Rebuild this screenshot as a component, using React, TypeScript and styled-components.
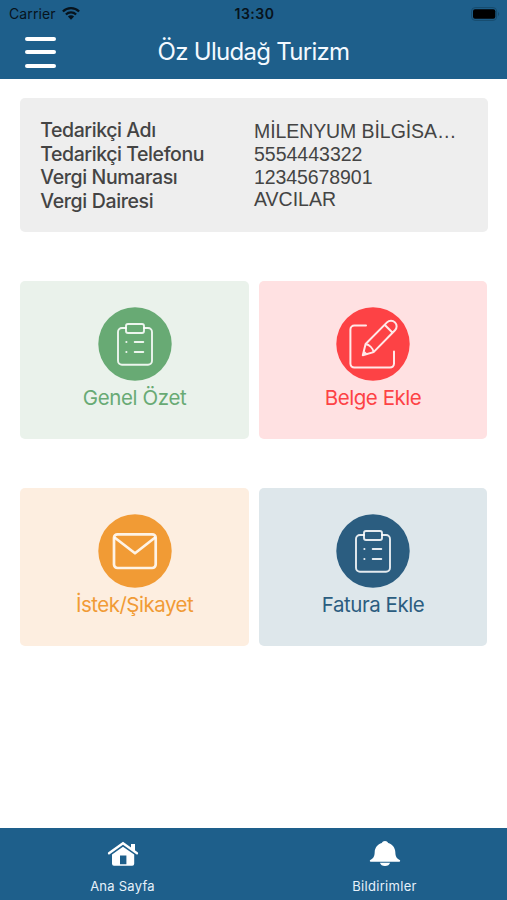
import React from "react";
import styled, { createGlobalStyle } from "styled-components";

const GlobalStyle = createGlobalStyle`
  * { box-sizing: border-box; }
  body { margin: 0; background: #fff; font-family: Inter, "Liberation Sans", sans-serif; }
`;

const Screen = styled.div`
  width: 507px;
  height: 900px;
  display: flex;
  flex-direction: column;
  background: #fff;
  overflow: hidden;
`;

const Header = styled.header`
  height: 79px;
  flex: none;
  background: #1e5f8b;
`;

const StatusBar = styled.div`
  height: 27px;
  padding: 0 7px 0 9px;
  display: grid;
  grid-template-columns: 1fr auto 1fr;
  align-items: center;
  color: #07131c;
`;

const Carrier = styled.div`
  display: flex;
  align-items: center;
  gap: 6px;
  font-size: 14px;
  letter-spacing: 0.1px;
`;

const Clock = styled.div`
  font-size: 14px;
  font-weight: 600;
  letter-spacing: 0.5px;
`;

const BatteryIcon = styled.svg`
  justify-self: end;
`;

const NavBar = styled.div`
  height: 50px;
  padding: 0 25px;
  display: grid;
  grid-template-columns: 32px 1fr 32px;
  align-items: center;
`;

const MenuButton = styled.button`
  width: 31px;
  height: 31px;
  padding: 0;
  border: 0;
  background: none;
  display: flex;
  flex-direction: column;
  justify-content: space-between;
`;

const MenuLine = styled.span`
  width: 31px;
  height: 4px;
  border-radius: 2px;
  background: #fff;
`;

const Title = styled.h1`
  margin: 0;
  text-align: center;
  font-size: 24px;
  line-height: 30px;
  font-weight: 400;
  letter-spacing: -0.72px;
  color: #f3f9ff;
`;

const Content = styled.main`
  flex: 1;
  padding: 19px 19px 0 20.3px;
`;

const InfoPanel = styled.section`
  height: 134px;
  padding: 21px 20px 0 20px;
  border-radius: 5px;
  background: #eee;
  display: grid;
  grid-template-columns: 213.7px 205px;
  color: #444;
`;

const LabelColumn = styled.div`
  font-size: 19.5px;
  line-height: 23.6px;
  font-weight: 450;
  white-space: nowrap;
`;

const ValueColumn = styled.div`
  padding-top: 1px;
  font-family: "Liberation Sans", sans-serif;
  font-size: 19.5px;
  line-height: 22.8px;
  white-space: nowrap;
`;

const InfoText = styled.div<{ $spacing?: number }>`
  letter-spacing: ${(p) => p.$spacing ?? 0}px;
`;

const CardGrid = styled.section`
  margin-top: 49px;
  display: grid;
  grid-template-columns: 228.5px 228.5px;
  grid-auto-rows: 158px;
  column-gap: 10px;
  row-gap: 49px;
`;

const Card = styled.button<{ $bg: string; $fg: string }>`
  padding: 26px 0 0;
  border: 0;
  border-radius: 5px;
  background: ${(p) => p.$bg};
  color: ${(p) => p.$fg};
  display: flex;
  flex-direction: column;
  align-items: center;
  font-family: inherit;
`;

const CardLabel = styled.span<{ $spacing: number }>`
  margin-top: 3px;
  font-size: 20.5px;
  line-height: 27px;
  letter-spacing: ${(p) => p.$spacing}px;
  white-space: nowrap;
`;

const TabBar = styled.nav`
  height: 72px;
  flex: none;
  padding: 12px 72px 0;
  background: #1e5f8b;
  display: flex;
  justify-content: space-between;
`;

const Tab = styled.a`
  width: 101px;
  display: flex;
  flex-direction: column;
  align-items: center;
  color: #fff;
`;

const TabLabel = styled.span<{ $spacing: number }>`
  margin-top: 9px;
  font-size: 13px;
  line-height: 18px;
  letter-spacing: ${(p) => p.$spacing}px;
  color: #e6f1fa;
`;

const Disc = ({ children, width }: { children: React.ReactNode; width: number }) => (
  <svg width="74" height="74" viewBox="0 0 74 74" fill="none">
    <circle cx="37" cy="37" r="36.7" fill="currentColor" />
    <g stroke="#fff" strokeOpacity="0.88" strokeWidth={width} strokeLinejoin="round" strokeLinecap="round">
      {children}
    </g>
  </svg>
);

const ClipboardIcon = () => (
  <Disc width={1.9}>
    <path d="M28 21h-4a4 4 0 0 0-4 4v28.700a4 4 0 0 0 4 4h26a4 4 0 0 0 4-4V25a4 4 0 0 0-4-4h-4" />
    <rect x="28" y="17" width="18" height="9" rx="2" />
    <path d="M28.300 35h.2M28.300 45h.2M36.700 35h8.600M36.700 45h8.600" />
  </Disc>
);

const EditIcon = () => (
  <Disc width={2}>
    <path d="M30 18.600H18.400a4 4 0 0 0-4 4v34a4 4 0 0 0 4 4H54a4 4 0 0 0 4-4V44.600" />
    <path d="M26.800 48.300 29.600 37 51 15.400a5.500 5.500 0 0 1 8 7.900L37.600 45.100ZM29.600 37c3.800.8 7.200 4.100 8 8.100M48.600 17.800l8 8M27.800 44.800l2.600 2.500" />
  </Disc>
);

const MailIcon = () => (
  <Disc width={2.7}>
    <rect x="16" y="20.300" width="41.700" height="33.700" rx="3.500" />
    <path d="m17.200 24 19.800 15.300L56.500 24" />
  </Disc>
);

const WifiIcon = () => (
  <svg width="18" height="13" viewBox="0 0 18 13" fill="none" stroke="currentColor" strokeWidth="2.300">
    <path d="M.9 4.500a11.600 11.600 0 0 1 16.200 0M3.900 7.500a7.300 7.300 0 0 1 10.200 0" />
    <path d="M9 12.700 5.900 9.600a4.400 4.400 0 0 1 6.200 0Z" fill="currentColor" stroke="none" />
  </svg>
);

const HomeIcon = () => (
  <svg width="32" height="28" viewBox="0 0 32 28">
    <path d="M2 13.300 16 3.200l14 10.100" fill="none" stroke="currentColor" strokeWidth="2.300" strokeLinecap="round" />
    <path d="M24 4h4v7.200l-4-2.900Z" fill="currentColor" />
    <path
      d="M16 6.800 5 14.600v9.200a2 2 0 0 0 2 2h18.200a2 2 0 0 0 2-2v-9.200ZM13 15.600h6.400v8.600H13Z"
      fill="currentColor"
      fillRule="evenodd"
    />
  </svg>
);

const BellIcon = () => (
  <svg width="32" height="28" viewBox="0 0 32 28" fill="currentColor">
    <path d="M16 1c-1.500 0-2.700.8-3.200 2.100C8.700 4.300 5.900 7.800 5.700 12c-.2 4.100-.8 6.100-4.400 8-.8.500-.6 1.700.4 1.700h28.600c1 0 1.200-1.200.4-1.700-3.600-1.900-4.200-3.900-4.400-8-.2-4.200-3-7.700-7.100-8.900C18.700 1.800 17.500 1 16 1ZM10.900 22.700h10.200c-.5 2-2.500 3.300-5.100 3.300s-4.600-1.300-5.100-3.300Z" />
  </svg>
);

const info = [
  { label: "Tedarikçi Adı", value: "MİLENYUM BİLGİSA…", ls: -0.43, vs: -0.08 },
  { label: "Tedarikçi Telefonu", value: "5554443322", ls: -0.43, vs: 0 },
  { label: "Vergi Numarası", value: "12345678901", ls: -0.38, vs: -0.08 },
  { label: "Vergi Dairesi", value: "AVCILAR", ls: -0.36, vs: 0 },
];

const cards = [
  { label: "Genel Özet", bg: "#eaf2eb", fg: "#68aa74", spacing: -0.38, Icon: ClipboardIcon },
  { label: "Belge Ekle", bg: "#ffe1e2", fg: "#fd4245", spacing: -0.45, Icon: EditIcon },
  { label: "İstek/Şikayet", bg: "#fdeee0", fg: "#f19b35", spacing: -0.5, Icon: MailIcon },
  { label: "Fatura Ekle", bg: "#dee7eb", fg: "#2b5d80", spacing: -0.45, Icon: ClipboardIcon },
];

export default function App() {
  return (
    <Screen>
      <GlobalStyle />
      <Header>
        <StatusBar>
          <Carrier>
            Carrier
            <WifiIcon />
          </Carrier>
          <Clock>13:30</Clock>
          <BatteryIcon width="29" height="14" viewBox="0 0 29 14">
            <rect x=".6" y=".6" width="25" height="12.800" rx="3.500" fill="none" stroke="#174b6d" />
            <rect x="2" y="2.200" width="22.300" height="9.600" rx="2" fill="#000" />
            <path d="M27 5v4c1.500-.6 1.500-3.400 0-4Z" fill="#174b6d" />
          </BatteryIcon>
        </StatusBar>
        <NavBar>
          <MenuButton aria-label="Menü">
            <MenuLine />
            <MenuLine />
            <MenuLine />
          </MenuButton>
          <Title>Öz Uludağ Turizm</Title>
        </NavBar>
      </Header>
      <Content>
        <InfoPanel>
          <LabelColumn>
            {info.map((row) => (
              <InfoText key={row.label} $spacing={row.ls}>{row.label}</InfoText>
            ))}
          </LabelColumn>
          <ValueColumn>
            {info.map((row) => (
              <InfoText key={row.value} $spacing={row.vs}>{row.value}</InfoText>
            ))}
          </ValueColumn>
        </InfoPanel>
        <CardGrid>
          {cards.map(({ label, bg, fg, spacing, Icon }) => (
            <Card key={label} $bg={bg} $fg={fg}>
              <Icon />
              <CardLabel $spacing={spacing}>{label}</CardLabel>
            </Card>
          ))}
        </CardGrid>
      </Content>
      <TabBar>
        <Tab>
          <HomeIcon />
          <TabLabel $spacing={0.25}>Ana Sayfa</TabLabel>
        </Tab>
        <Tab>
          <BellIcon />
          <TabLabel $spacing={0.3}>Bildirimler</TabLabel>
        </Tab>
      </TabBar>
    </Screen>
  );
}
